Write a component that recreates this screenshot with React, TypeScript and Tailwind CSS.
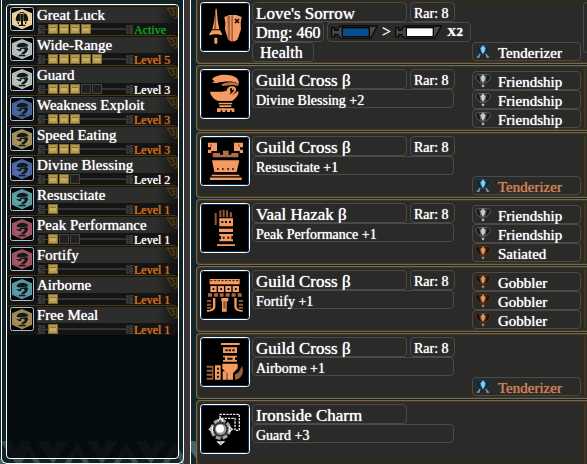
import React from "react";

type Tone = "active" | "max" | "plain";
type Skill = { name: string; filled: number; total: number; status: string; tone: Tone; color: string };

const skills: Skill[] = [
  { name: "Great Luck", filled: 4, total: 4, status: "Active", tone: "active", color: "#f3d9a4" },
  { name: "Wide-Range", filled: 5, total: 5, status: "Level 5", tone: "max", color: "#b9c4c0" },
  { name: "Guard", filled: 3, total: 5, status: "Level 3", tone: "plain", color: "#bcc4be" },
  { name: "Weakness Exploit", filled: 3, total: 3, status: "Level 3", tone: "max", color: "#4b679f" },
  { name: "Speed Eating", filled: 3, total: 3, status: "Level 3", tone: "max", color: "#a8945f" },
  { name: "Divine Blessing", filled: 2, total: 3, status: "Level 2", tone: "plain", color: "#506ba8" },
  { name: "Resuscitate", filled: 1, total: 1, status: "Level 1", tone: "max", color: "#5fa3a3" },
  { name: "Peak Performance", filled: 1, total: 3, status: "Level 1", tone: "plain", color: "#a85565" },
  { name: "Fortify", filled: 1, total: 1, status: "Level 1", tone: "max", color: "#a85565" },
  { name: "Airborne", filled: 1, total: 1, status: "Level 1", tone: "max", color: "#5b9eaa" },
  { name: "Free Meal", filled: 1, total: 1, status: "Level 1", tone: "max", color: "#a88f56" },
];

const toneClass: Record<Tone, string> = {
  active: "text-[#10a41c]",
  max: "text-[#d96f20]",
  plain: "text-white",
};

function SkillIcon({ color, moth }: { color: string; moth: boolean }) {
  return (
    <svg viewBox="0 0 72 72" className="size-6 shrink-0" aria-hidden="true">
      <rect x="1.5" y="1.5" width="69" height="69" rx="6" fill="#020406" stroke="#a9bdd2" strokeWidth="3" />
      <path d="M36 6 66 19V53L36 67 6 53V19Z" fill={color} />
      <path d="M36 11 61 22V50L36 62 11 50V22Z" fill="none" stroke="#000" strokeOpacity=".18" strokeWidth="2" />
      {moth ? (
        <g fill="#17130d">
          <path d="M27 19c-7 3-10 12-10 21l5 4 4-3 3 3 3-3V20ZM45 19c7 3 10 12 10 21l-5 4-4-3-3 3-3-3V20Z" />
          <path d="M33 17h6v36h-6ZM26 53h20v4H26ZM23 45h4v6h-4ZM45 45h4v6h-4ZM29 15l4 5h6l4-5" />
        </g>
      ) : (
        <g fill="#11191b">
          <path d="M20 26c4-10 23-12 32-4l4 6c-10 1-23 4-31 3l-5-2Z" />
          <path d="M30 33 51 30l4 6-5 10-8 6h-9l4-6 6-4 1-4-5-3-9 2Z" />
          <path d="M17 35c7 2 13 2 18 0l-2 8-7-1ZM28 53h17l3 5H25Z" />
        </g>
      )}
    </svg>
  );
}

function Fret({ flip }: { flip?: boolean }) {
  return (
    <svg viewBox="0 0 27 27" className={flip ? "size-[9px] shrink-0 -scale-x-100" : "size-[9px] shrink-0"} aria-hidden="true">
      <path d="M21 0v27M20 4 5 14 20 24M12 14H27M2 1h11L3 11M2 26h11L3 17" fill="none" stroke="#3e3e3c" strokeWidth="4" />
    </svg>
  );
}

function SkillRow({ skill }: { skill: Skill }) {
  return (
    <li className="flex h-[30px] gap-[3px] rounded-sm border-t border-[#4b3710] bg-[#131413] pt-px pl-[3px]">
      <SkillIcon color={skill.color} moth={skill.tone === "active"} />
      <div className="flex min-w-0 flex-1 flex-col">
        <div className="flex h-4 justify-between bg-linear-to-r from-[#2d2e2c] from-85% to-[#151614]">
          <span className="text-[15px] leading-4 whitespace-nowrap text-white">{skill.name}</span>
          <svg viewBox="0 0 36 36" className="h-3 w-3 shrink-0" aria-hidden="true">
            <path d="M2 3H33V33M4 4 19 27 27 21 20 12M14 4 27 13M25 33h8" fill="none" stroke="#4f3c10" strokeWidth="4" />
          </svg>
        </div>
        <div className="flex h-3 items-center">
          <div className="flex w-[97px] shrink-0 items-center">
            <Fret />
            <span className="h-px w-0.5 bg-[#41423f]" />
            <div className="flex gap-px">
              {Array.from({ length: skill.total }, (_, i) => (
                <span
                  key={i}
                  className={
                    i < skill.filled
                      ? "flex size-2.5 items-center justify-center border border-[#7d6a31] bg-[#b39a4f]"
                      : "size-2.5 border border-[#444441] bg-[#20211f]"
                  }
                >
                  {i < skill.filled && <span className="h-1 w-1.5 border-t border-[#8b7537] bg-[#c8ae63]" />}
                </span>
              ))}
            </div>
            <span className="h-0.5 flex-1 bg-[#343533]" />
            <Fret flip />
          </div>
          <span className={`pt-0.5 text-[12px] leading-3 whitespace-nowrap ${toneClass[skill.tone]}`}>{skill.status}</span>
        </div>
      </div>
    </li>
  );
}

type Kind = "weapon" | "head" | "chest" | "arms" | "waist" | "legs" | "charm";

const art: Record<Kind, React.ReactNode> = {
  weapon: (
    <>
      <path d="M47 20h3L53 55 58 82H37L43 55Z" />
      <path d="M46 24h2v57h-5Z" fill="#9a5734" />
      <path d="M36 85h24l6 10v5l-13-3H42l-14 3v-5ZM43 107h9v16l-4 4-5-4Z" />
      <path d="M73 45 88 39h21l16 6-3 17 1 20-10 30-8 6H92l-8-6-9-30 1-20Z" />
      <path d="M82 42h8v73l-6-5ZM94 40h5v78h-5Z" fill="#a9623d" />
      <path d="M105 51 117 63M117 51 105 63" stroke="#080808" strokeWidth="5" />
    </>
  ),
  head: (
    <>
      <path d="M36 31C48 14 91 13 110 27c5 5 7 11 7 18C98 34 70 38 50 42l-15-1 9-4Z" />
      <path d="M64 47c14-9 40-9 52-1l-2 5-16-3-32 3Z" fill="#bc7047" />
      <path d="M30 68c20 1 36 1 50-3 1-10 10-15 19-13 9 1 12 11 6 18l-10 10 20-15c3 14-10 24-19 31H55C41 91 32 80 30 68Z" />
      <path d="M89 60c3-5 13-4 13 3 0 5-5 9-14 15 5-7 5-11 1-18Z" fill="#070707" />
      <circle cx="98" cy="60" r="3" fill="#f59b62" />
      <path d="M57 101h38l3 5H54ZM58 109h36v5H58ZM51 118h52v11h-8v-5h-5v5h-9v-5h-5v5h-9v-5h-5v5H51Z" />
    </>
  ),
  chest: (
    <>
      <path d="M24 20h27v25H34v6H24V41h9v-7h-9ZM102 20h27v14h-9v7h9v10h-10v-6h-17Z" />
      <path d="M30 25h6v7h-6ZM114 25h6v7h-6ZM38 51h22v5h9V44h17v12h8v-5h21v13H38Z" fill="#b16e48" />
      <path d="M36 73h82l-8 35H43ZM35 116h83v5H35ZM30 123h95v9H30Z" />
      <path d="M51 96h5v6h-5ZM66 96h5v6h-5ZM82 96h5v6h-5ZM96 96h5v6h-5ZM29 122h97v3H29Z" fill="#3c2419" />
    </>
  ),
  arms: (
    <>
      <path d="M44 30h6v36h-6zM58 22h6v20h-6zM68 20h6v22h-6zM78 22h6v20h-6zM89 28h7v15h-7z" fill="#925737" />
      <path d="M58 46h41v24H58ZM57 77h42v10H57ZM58 93h41v6h-5v10h5v6H58v-6h5V99h-5ZM51 124h54v5H51Z" />
      <path d="M64 54h6v6h-6zM75 54h6v6h-6zM87 54h6v6h-6zM68 101h6v6h-6zM82 101h6v6h-6z" fill="#111" />
    </>
  ),
  waist: (
    <>
      <path d="M29 27h90v16H29z" />
      <path d="M31 32h86" stroke="#2f1d15" strokeWidth="3" strokeDasharray="7 4" />
      <path d="M31 48h19v18H31zM54 48h18v18H54zM76 48h18v18H76zM98 48h19v18H98z" />
      <path d="M38 54h5v6h-5zM61 54h5v6h-5zM83 54h5v6h-5zM105 54h5v6h-5z" fill="#000" />
      <path d="M24 70h12v10H24zM42 70h12v10H42zM59 70h12v10H59zM77 70h12v10H77zM95 70h12v10H95zM113 70h12v10h-12z" fill="#a66744" />
      <path d="M39 84h7v28c-2 9-10 14-25 13v-5c13 0 18-4 18-12ZM103 84h7v24c0 8 5 12 18 12v5c-15 1-23-4-25-13ZM64 84h21v10h-5v31H66V94h-2Z" />
      <path d="M21 90h13v6H21zM21 101h13v6H21zM21 111h13v5H21zM116 90h13v6h-13zM116 101h13v6h-13zM116 111h13v5h-13zM70 94h7v22h-7z" fill="#8f5739" />
    </>
  ),
  legs: (
    <>
      <path d="M63 18h56v6H63zM69 31h42v17H69zM69 56h42v5h-6v8h6v5H69v-5h6v-8h-6ZM67 80h46v14l-14 15v19H82v-19L67 95Z" />
      <path d="M76 37h7v6h-7zM86 37h7v6h-7zM97 37h7v6h-7zM82 62h16v6H82z" fill="#17100c" />
      <path d="M45 85h17v43H45zM68 103h12v25H68z" />
      <path d="M51 92h6v6h-6zM51 104h6v6h-6zM51 116h6v6h-6z" fill="#111" />
      <path d="M20 86h16v6H20zM20 98h16v6H20zM20 110h16v6H20zM20 122h16v6H20zM36 86h4v42h-4zM126 86c6 18 3 36-20 43l-2-16 12-7Z" fill="#9a603e" />
    </>
  ),
  charm: (
    <g fill="none">
      <path d="M60 42V31h58v48h-13V43H58" stroke="#ececec" strokeWidth="4" strokeDasharray="7 3" />
      <circle cx="62" cy="76" r="27" fill="#333" stroke="#a5a5a5" strokeWidth="9" strokeDasharray="15 6" />
      <path d="M37 69 28 76l9 7ZM88 69l9 7-9 7ZM54 51l8-8 8 8M54 114l8 8 9-8Z" stroke="#eee" strokeWidth="4" />
      <circle cx="62" cy="76" r="17" fill="#9d9d9d" />
      <circle cx="60" cy="74" r="12" fill="#fff" />
    </g>
  ),
};

function GearIcon({ kind }: { kind: Kind }) {
  return (
    <svg viewBox="0 0 150 150" className="size-[50px] shrink-0" aria-hidden="true">
      <rect x="1.5" y="1.5" width="147" height="147" rx="9" fill="#000" stroke="#fff" strokeWidth="3" />
      <rect x="4.5" y="4.5" width="141" height="141" rx="6" fill="none" stroke="#0a315c" strokeWidth="3" />
      <g fill="#f59b62">{art[kind]}</g>
    </svg>
  );
}

type Jewel = { name: string; rank: "blue" | "white" | "bronze"; dim?: boolean };
const jewelColors = {
  blue: { edge: "#1f425a", gem: "#6dbfe6", back: "#132631" },
  white: { edge: "#5f625f", gem: "#b9bebb", back: "#1b1d1b" },
  bronze: { edge: "#64341a", gem: "#bd824b", back: "#21120c" },
};

function JewelIcon({ rank }: { rank: Jewel["rank"] }) {
  const c = jewelColors[rank];
  return (
    <svg viewBox="0 0 48 44" className="h-[15px] w-4 shrink-0" aria-hidden="true">
      <path d="M14 4C5 1-1 9 4 19l11 11h18l11-11C49 9 43 1 34 4Z" fill={c.back} stroke={c.edge} strokeWidth="3" />
      <path d="M14 5c3 10 2 18 4 24M34 5c-3 10-2 18-4 24" fill="none" stroke={c.edge} strokeWidth="3" />
      <path d="M24 3 32 12 29 22 24 30 19 22 16 12Z" fill={c.gem} />
      <path d="M24 8v17" stroke="#fff" strokeOpacity=".5" strokeWidth="3" />
      {rank === "blue" ? (
        <path d="M15 30 10 38M33 30l5 8M5 39h9M34 39h9" stroke="#68abc8" strokeWidth="4" />
      ) : (
        <path d="M24 33 29 38 24 43 19 38Z" fill={c.gem} />
      )}
    </svg>
  );
}

function JewelList({ items }: { items: Jewel[] }) {
  return (
    <ul className="flex w-[109px] shrink-0 flex-col justify-end">
      {items.map((j, i) => (
        <li key={i} className="flex h-[19px] items-center gap-[7px] rounded border border-[#4a4a48] pl-0.5">
          <JewelIcon rank={j.rank} />
          <span className={`pt-0.5 text-[15px] leading-4 whitespace-nowrap ${j.dim ? "text-[#d08355]" : "text-white"}`}>{j.name}</span>
        </li>
      ))}
    </ul>
  );
}

function Sharpness({ color }: { color: string }) {
  return (
    <svg viewBox="0 0 141 45" className="h-[15px] w-[47px] shrink-0" aria-hidden="true">
      <path d="M2 9h9v7h10V10L30 3H139l-20 37H30l-9-7V28H11v7H2Z" fill="#484a47" stroke="#090a09" strokeWidth="4" />
      <rect x="34" y="8" width="81" height="27" fill={color} stroke="#050505" strokeWidth="4" />
    </svg>
  );
}

const box = "flex shrink-0 items-center rounded border border-[#4a4a48] whitespace-nowrap";

type Gear = { kind: Kind; name: string; skill?: string; rare?: string; jewels: Jewel[] };

const gear: Gear[] = [
  { kind: "weapon", name: "Love's Sorrow", rare: "Rar: 8", jewels: [{ name: "Tenderizer", rank: "blue" }] },
  {
    kind: "head", name: "Guild Cross β", skill: "Divine Blessing +2", rare: "Rar: 8",
    jewels: [{ name: "Friendship", rank: "white" }, { name: "Friendship", rank: "white" }, { name: "Friendship", rank: "white" }],
  },
  { kind: "chest", name: "Guild Cross β", skill: "Resuscitate +1", rare: "Rar: 8", jewels: [{ name: "Tenderizer", rank: "blue", dim: true }] },
  {
    kind: "arms", name: "Vaal Hazak β", skill: "Peak Performance +1", rare: "Rar: 8",
    jewels: [{ name: "Friendship", rank: "white" }, { name: "Friendship", rank: "white" }, { name: "Satiated", rank: "bronze" }],
  },
  {
    kind: "waist", name: "Guild Cross β", skill: "Fortify +1", rare: "Rar: 8",
    jewels: [{ name: "Gobbler", rank: "bronze" }, { name: "Gobbler", rank: "bronze" }, { name: "Gobbler", rank: "bronze" }],
  },
  { kind: "legs", name: "Guild Cross β", skill: "Airborne +1", rare: "Rar: 8", jewels: [{ name: "Tenderizer", rank: "blue", dim: true }] },
  { kind: "charm", name: "Ironside Charm", skill: "Guard +3", jewels: [] },
];

function GearCard({ item }: { item: Gear }) {
  const weapon = item.kind === "weapon";
  return (
    <li className="h-[66px] shrink-0 rounded-l border border-r-0 border-[#666b6b] bg-[#4b3510] p-px pr-0">
      <article className="flex h-full rounded-l-sm border border-r-0 border-[#3a2b12] bg-[#2a2b29] pt-px pl-px">
        <GearIcon kind={item.kind} />
        <div className="ml-0.5 flex min-w-0 flex-1 flex-col">
          <div className="flex gap-[3px]">
            <h2 className={`${box} h-5 w-[155px] px-[3px] pt-1 text-[17px] leading-4 text-white`}>{item.name}</h2>
            {item.rare && <span className={`${box} h-5 w-[45px] px-[3px] pt-1 text-[14px] leading-4 text-white`}>{item.rare}</span>}
          </div>
          {weapon ? (
            <>
              <div className="flex gap-[3px]">
                <span className={`${box} h-5 w-[72px] px-[3px] pt-0.5 text-[16px] leading-4 text-white`}>Dmg: 460</span>
                <div className={`${box} h-5 w-[144px] gap-1 px-[3px] text-[16px] leading-4 text-white`}>
                  <Sharpness color="#074f91" />
                  <span>&gt;</span>
                  <Sharpness color="#ffffff" />
                  <span className="pl-px text-[13px] font-bold">X2</span>
                </div>
              </div>
              <span className={`${box} h-5 w-[62px] px-[7px] pt-0.5 text-[16px] leading-4 text-white`}>Health</span>
            </>
          ) : (
            <p className={`${box} h-[19px] w-[202px] px-[3px] pt-1 text-[14px] leading-4 text-white`}>{item.skill}</p>
          )}
        </div>
        <div className="flex h-[59px] shrink-0 self-start">
          <JewelList items={item.jewels} />
        </div>
        {weapon ? (
          <div className="ml-0.5 h-[51px] w-1 shrink-0 rounded-l border border-r-0 border-[#4a4a48]" />
        ) : (
          <div className="mr-px ml-[3px] w-0.5 shrink-0 bg-[#493510]" />
        )}
      </article>
    </li>
  );
}

function TriangleFrieze() {
  return (
    <svg viewBox="0 0 200 24" className="absolute bottom-0 left-0 h-6 w-[200px]" aria-hidden="true">
      {[-9, 28, 77, 126, 175].map((x) => (
        <g key={x} fill="#47666c">
          <path d={`M${x - 13} 24 ${x} 2 ${x + 13} 24H${x + 7}L${x} 13 ${x - 7} 24Z`} />
          <path d={`M${x + 9} 1H${x + 41}L${x + 25} 24ZM${x + 20} 1 ${x + 25} 9 ${x + 30} 1Z`} fillRule="evenodd" />
        </g>
      ))}
    </svg>
  );
}

export default function App() {
  return (
    <main className="relative flex h-screen overflow-hidden bg-[#142629] font-['Liberation_Serif',serif] [text-shadow:0_0_1px_currentColor]">
      <TriangleFrieze />
      <div className="relative flex w-[190px] shrink-0 pl-px">
        <section aria-label="Skills" className="flex min-w-0 flex-1 rounded-b-md border-x border-b border-white bg-[#0d1e20]/30 px-1 pt-1 pb-1">
          <ul className="w-full rounded border border-white bg-[#030809]/85">
            {skills.map((s) => <SkillRow key={s.name} skill={s} />)}
          </ul>
        </section>
        <div className="w-1.5 shrink-0 bg-[#393536]" />
      </div>
      <section aria-label="Equipment" className="relative min-w-0 flex-1 border-l border-white pl-[5px]">
        <ul className="-mt-0.5 flex flex-col gap-px">
          {gear.map((g) => <GearCard key={g.kind} item={g} />)}
        </ul>
      </section>
    </main>
  );
}
